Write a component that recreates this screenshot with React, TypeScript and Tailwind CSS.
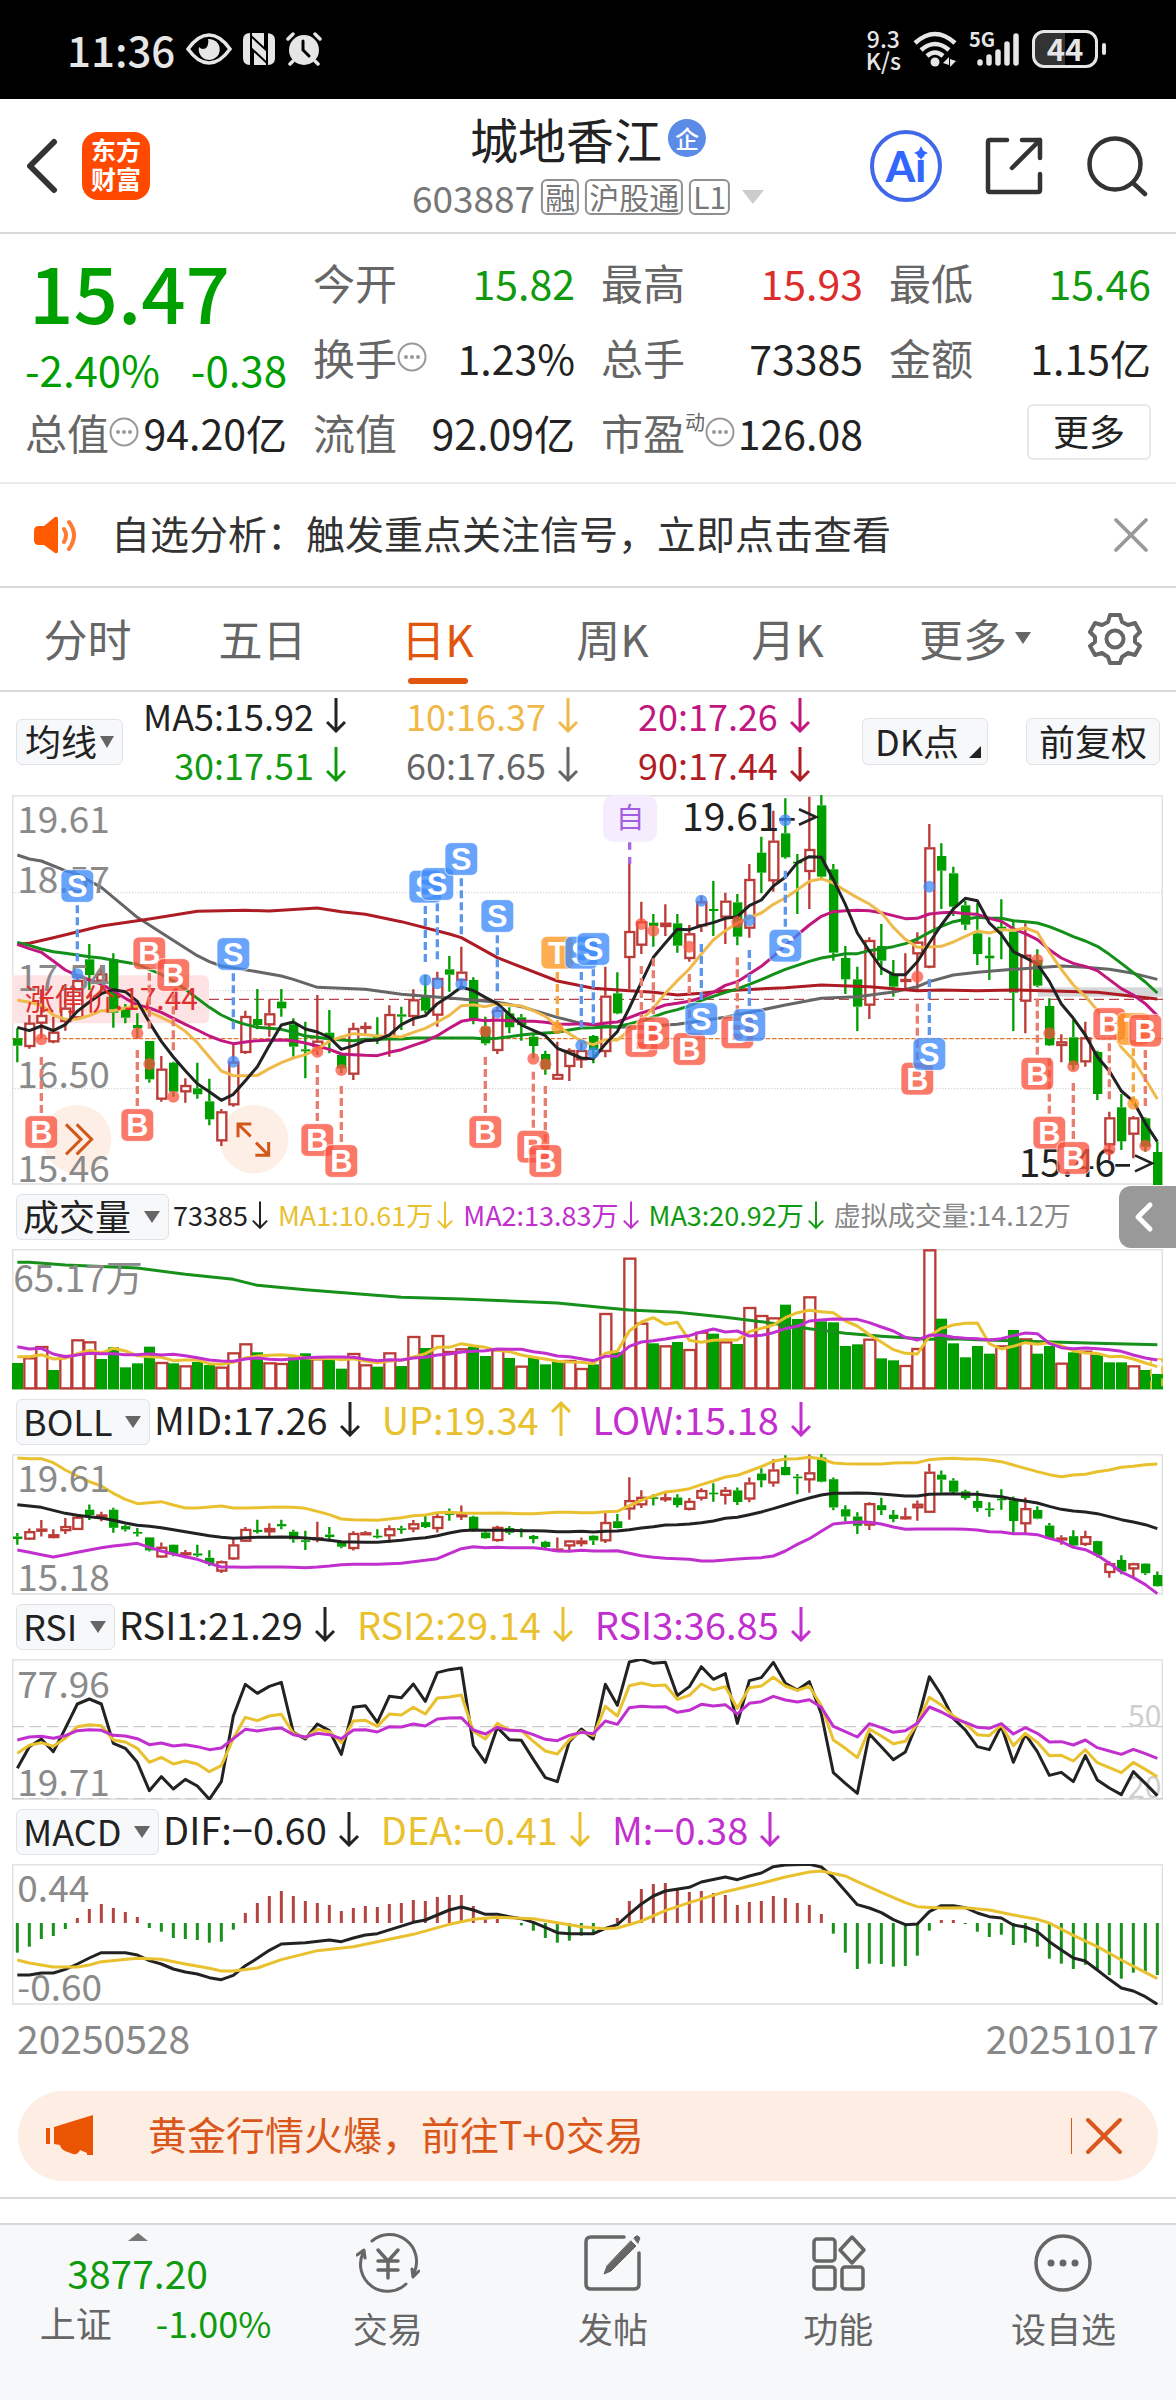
import React from "react";
import { X, ChevronLeft } from "lucide-react";

type Pt = [number, number];
type Candle = [string, number, number, number, number];

/* ------------------------------------------------------------------ */
/* Chart data, in chart units: one slot is 36 units wide               */
/* ------------------------------------------------------------------ */

// colour, high, body top, body bottom, low
const CANDLES: Candle[] = [
  ["g", 745, 775, 797, 847], ["r", 705, 728, 800, 806], ["r", 628, 705, 730, 775], ["r", 710, 755, 786, 790],
  ["r", 612, 683, 725, 752], ["r", 590, 600, 714, 718], ["g", 492, 538, 585, 630], ["r", 555, 580, 604, 640],
  ["g", 520, 538, 698, 743], ["g", 672, 683, 713, 730], ["g", 700, 735, 745, 775], ["g", 783, 783, 898, 908],
  ["r", 828, 866, 958, 965], ["g", 845, 848, 935, 950], ["r", 895, 915, 936, 968], ["g", 848, 925, 943, 956],
  ["g", 896, 964, 1018, 1036], ["r", 987, 994, 1083, 1098], ["r", 790, 845, 975, 980], ["r", 692, 708, 818, 822],
  ["g", 627, 717, 735, 748], ["r", 658, 700, 735, 770], ["g", 627, 665, 685, 710], ["g", 715, 733, 800, 830],
  ["g", 725, 808, 814, 895], ["r", 645, 782, 800, 825], ["g", 690, 758, 780, 820], ["g", 820, 825, 865, 880],
  ["r", 728, 744, 883, 900], ["r", 727, 738, 746, 762], ["g", 712, 768, 774, 792], ["r", 676, 702, 770, 830],
  ["g", 680, 703, 710, 750], ["r", 628, 658, 710, 738], ["g", 585, 648, 692, 700], ["r", 575, 594, 706, 740],
  ["g", 528, 568, 584, 635], ["r", 500, 575, 602, 630], ["g", 592, 600, 717, 733], ["g", 710, 740, 790, 796],
  ["r", 680, 690, 812, 822], ["g", 682, 700, 742, 760], ["g", 702, 712, 735, 782], ["g", 762, 770, 798, 835],
  ["g", 812, 822, 868, 884], ["r", 785, 882, 898, 900], ["r", 805, 810, 860, 903], ["r", 785, 810, 840, 864],
  ["g", 765, 768, 810, 850], ["r", 560, 647, 815, 832], ["g", 577, 640, 700, 703], ["r", 250, 453, 533, 627],
  ["r", 365, 424, 496, 522], ["g", 402, 428, 438, 500], ["r", 373, 428, 440, 468], ["g", 402, 430, 497, 518],
  ["r", 435, 460, 536, 545], ["r", 348, 364, 438, 456], ["g", 303, 387, 393, 468], ["r", 338, 362, 412, 492],
  ["g", 342, 367, 470, 496], ["r", 252, 297, 445, 473], ["g", 170, 218, 278, 340], ["r", 92, 182, 303, 335],
  ["g", 55, 160, 232, 236], ["g", 222, 245, 250, 402], ["r", 50, 207, 275, 387], ["g", 45, 76, 290, 295],
  ["g", 252, 268, 518, 542], ["g", 498, 534, 598, 642], ["g", 560, 598, 680, 753], ["r", 472, 480, 676, 717],
  ["g", 432, 498, 542, 585], ["g", 540, 582, 620, 650], ["r", 520, 597, 603, 625], ["r", 457, 485, 522, 635],
  ["r", 132, 202, 562, 565], ["g", 190, 228, 272, 387], ["g", 260, 280, 380, 408], ["g", 362, 376, 434, 450],
  ["g", 370, 460, 522, 555], ["g", 472, 527, 535, 600], ["g", 358, 440, 446, 538], ["g", 420, 455, 638, 753],
  ["r", 430, 524, 664, 760], ["g", 508, 540, 617, 622], ["g", 655, 678, 796, 798], ["r", 763, 784, 797, 847],
  ["g", 720, 772, 855, 870], ["r", 725, 772, 846, 860], ["g", 812, 816, 942, 960], ["r", 995, 1012, 1095, 1140],
  ["g", 942, 982, 1084, 1110], ["r", 1008, 1012, 1063, 1135], ["g", 1012, 1015, 1100, 1115], ["g", 1085, 1116, 1215, 1218],
];

const VOLUME_TOPS = [
  549, 532, 498, 570, 525, 478, 484, 537, 502, 562, 550, 500, 546, 550, 556, 546, 555, 560, 517, 490, 517, 547, 549, 532,
  520, 535, 540, 566, 519, 553, 560, 517, 558, 468, 504, 465, 513, 505, 500, 528, 508, 534, 557, 532, 553, 546, 540, 564,
  553, 399, 516, 233, 428, 490, 496, 486, 507, 455, 461, 484, 492, 381, 405, 412, 374, 417, 349, 424, 427, 498, 493, 476,
  535, 541, 555, 504, 208, 416, 490, 532, 498, 521, 496, 450, 475, 521, 498, 548, 517, 512, 524, 547, 547, 556, 570, 582,
];
const VOLUME_COLORS =
  "grrgrrrgggggrgrggrrrgrrggrggrrgrgrgrrrggrgrgggrr" + "grgrrgrgrrgrgrrrggrggggrggrrrgggggrgrggrgrgggrgg";

const RSI1 = [
  535, 470, 447, 485, 415, 342, 327, 342, 460, 475, 517, 602, 560, 597, 568, 588, 628, 575, 378, 283, 310, 289, 277, 427,
  447, 402, 422, 493, 352, 347, 397, 319, 323, 282, 334, 248, 239, 234, 466, 517, 412, 449, 451, 508, 563, 575, 455, 417,
  447, 283, 346, 216, 208, 220, 217, 317, 290, 230, 268, 251, 400, 272, 263, 217, 280, 300, 275, 372, 548, 580, 610, 432,
  470, 509, 486, 398, 260, 315, 385, 420, 470, 479, 408, 517, 433, 485, 556, 547, 575, 497, 570, 594, 614, 545, 580, 617,
];
const RSI2 = [
  490, 466, 458, 469, 445, 410, 404, 407, 450, 456, 475, 517, 502, 522, 513, 522, 545, 527, 445, 382, 392, 378, 373, 430,
  443, 418, 425, 458, 393, 391, 409, 372, 375, 352, 372, 324, 321, 315, 424, 447, 400, 420, 422, 454, 483, 492, 449, 424,
  437, 349, 378, 287, 279, 287, 285, 328, 316, 282, 300, 290, 355, 293, 288, 262, 288, 301, 289, 347, 450, 475, 503, 417,
  438, 461, 454, 400, 322, 345, 378, 400, 434, 437, 405, 467, 430, 457, 497, 496, 513, 479, 518, 533, 548, 517, 538, 560,
];
const RSI3 = [
  450, 441, 439, 445, 437, 422, 419, 421, 436, 438, 446, 464, 459, 468, 464, 470, 479, 474, 446, 418, 423, 417, 414, 434,
  441, 430, 434, 446, 420, 419, 426, 410, 411, 402, 408, 387, 384, 383, 420, 432, 412, 421, 422, 434, 448, 452, 436, 427,
  431, 393, 403, 353, 349, 351, 350, 367, 361, 343, 348, 344, 372, 340, 335, 319, 330, 336, 329, 352, 409, 425, 441, 401,
  413, 427, 422, 400, 351, 366, 385, 397, 412, 415, 401, 432, 413, 430, 456, 455, 465, 450, 473, 483, 493, 478, 491, 505,
];

const MACD_BARS = [
  1088, 1070, 1047, 1038, 1017, 984, 957, 942, 954, 966, 981, 1014, 1025, 1044, 1047, 1050, 1058, 1055, 1019, 969, 939,
  918, 903, 918, 933, 939, 945, 963, 954, 948, 951, 942, 939, 930, 933, 921, 915, 915, 948, 981, 987, 999, 1006, 1022,
  1044, 1058, 1052, 1037, 1034, 999, 984, 933, 897, 882, 879, 897, 906, 903, 909, 915, 945, 936, 933, 918, 924, 939, 945,
  972, 1031, 1088, 1137, 1121, 1122, 1130, 1128, 1097, 1022, 990, 990, 1002, 1025, 1041, 1034, 1065, 1058, 1070, 1106,
  1121, 1137, 1124, 1137, 1155, 1166, 1148, 1145, 1155,
];
const DIF: Pt[] = [
  [0, 1155], [1, 1155], [2, 1149], [3, 1149], [4, 1138], [5, 1122], [6, 1104], [7, 1088], [9, 1088], [10, 1095],
  [11, 1112], [12, 1122], [13, 1137], [14, 1146], [15, 1152], [16, 1163], [17, 1169], [18, 1156], [19, 1127], [20, 1105],
  [21, 1081], [22, 1062], [24, 1058], [26, 1050], [27, 1055], [28, 1044], [29, 1035], [30, 1031], [33, 997], [34, 990],
  [35, 975], [36, 960], [37, 951], [38, 960], [39, 973], [40, 973], [41, 980], [42, 986], [43, 997], [44, 1012],
  [45, 1028], [46, 1031], [48, 1031], [49, 1015], [50, 1004], [51, 972], [52, 942], [53, 918], [54, 903], [56, 892],
  [57, 876], [59, 861], [60, 869], [61, 858], [62, 849], [63, 830], [64, 825], [66, 823], [67, 831], [68, 862],
  [69, 903], [70, 944], [71, 954], [72, 968], [73, 989], [74, 1004], [75, 1002], [76, 965], [77, 947], [78, 947],
  [79, 953], [80, 969], [81, 980], [82, 984], [83, 1005], [84, 1011], [85, 1025], [86, 1055], [87, 1080], [88, 1104],
  [89, 1113], [90, 1140], [91, 1168], [92, 1194], [93, 1203], [94, 1220], [95, 1243],
];
const DEA: Pt[] = [
  [0, 1110], [1, 1119], [3, 1131], [5, 1131], [6, 1125], [7, 1115], [10, 1105], [12, 1108], [14, 1122], [16, 1135],
  [17, 1143], [18, 1143], [20, 1134], [22, 1109], [25, 1082], [28, 1070], [30, 1055], [33, 1033], [36, 1003], [38, 988],
  [40, 982], [43, 986], [45, 998], [47, 1010], [49, 1016], [50, 1014], [52, 993], [54, 962], [56, 938], [59, 905],
  [62, 880], [64, 861], [66, 846], [67, 843], [69, 858], [70, 875], [72, 907], [74, 938], [75, 950], [77, 954],
  [79, 953], [81, 960], [83, 975], [85, 988], [86, 999], [88, 1036], [90, 1070], [92, 1110], [94, 1147], [95, 1166],
];

const MA60: Pt[] = [
  [0, 225], [1, 237], [2, 243], [4, 272], [5, 283], [7, 322], [10, 412], [12, 458], [15, 527], [16, 545], [17, 558],
  [20, 575], [22, 588], [23, 598], [25, 622], [29, 628], [32, 643], [37, 657], [40, 667], [42, 680], [45, 712],
  [47, 730], [50, 742], [52, 740], [55, 733], [57, 722], [59, 712], [62, 690], [64, 675], [67, 655], [70, 650],
  [73, 636], [75, 620], [76, 605], [78, 585], [80, 577], [83, 568], [87, 558], [89, 562], [91, 568], [93, 580], [95, 598],
];
const MA90: Pt[] = [
  [0, 493], [1, 490], [3, 473], [7, 438], [11, 417], [15, 394], [19, 391], [21, 393], [25, 384], [27, 395], [29, 403],
  [31, 418], [32, 425], [36, 462], [37, 473], [40, 533], [45, 603], [48, 625], [51, 632], [53, 637], [55, 645],
  [57, 640], [59, 632], [64, 623], [67, 615], [71, 620], [75, 632], [77, 630], [80, 632], [83, 630], [87, 634],
  [90, 637], [95, 657],
];
const VOLUME_LONG: Pt[] = [
  [0, 247], [1, 247], [4, 255], [10, 264], [14, 283], [18, 298], [20, 316], [24, 329], [32, 352], [37, 357], [45, 369],
  [49, 383], [51, 390], [55, 397], [59, 412], [62, 425], [66, 446], [69, 460], [72, 469], [76, 478], [78, 476],
  [80, 479], [84, 484], [90, 490], [95, 494],
];

type Marker = { kind: "S" | "B" | "T"; i: number; y: number; dot: number };
const MARKERS: Marker[] = [
  { kind: "S", i: 5, y: 318, dot: 583 }, { kind: "B", i: 2, y: 1056, dot: 778 }, { kind: "B", i: 10, y: 1035, dot: 760 },
  { kind: "B", i: 11, y: 520, dot: 852 }, { kind: "B", i: 13, y: 585, dot: 950 }, { kind: "S", i: 18, y: 522, dot: 845 },
  { kind: "B", i: 25, y: 1080, dot: 815 }, { kind: "B", i: 27, y: 1143, dot: 870 }, { kind: "S", i: 34, y: 320, dot: 600 },
  { kind: "S", i: 35, y: 312, dot: 610 }, { kind: "S", i: 37, y: 237, dot: 612 }, { kind: "B", i: 39, y: 1056, dot: 754 },
  { kind: "S", i: 40, y: 408, dot: 697 }, { kind: "B", i: 43, y: 1100, dot: 836 }, { kind: "B", i: 44, y: 1143, dot: 853 },
  { kind: "T", i: 45, y: 518, dot: 744 }, { kind: "S", i: 47, y: 518, dot: 796 }, { kind: "S", i: 48, y: 507, dot: 818 },
  { kind: "B", i: 52, y: 783, dot: 432 }, { kind: "B", i: 53, y: 760, dot: 452 }, { kind: "B", i: 56, y: 807, dot: 500 },
  { kind: "S", i: 57, y: 717, dot: 362 }, { kind: "B", i: 60, y: 757, dot: 426 }, { kind: "S", i: 61, y: 735, dot: 421 },
  { kind: "S", i: 64, y: 497, dot: 121 }, { kind: "B", i: 75, y: 896, dot: 590 }, { kind: "S", i: 76, y: 822, dot: 320 },
  { kind: "B", i: 85, y: 881, dot: 540 }, { kind: "B", i: 86, y: 1058, dot: 760 }, { kind: "B", i: 88, y: 1134, dot: 859 },
  { kind: "B", i: 91, y: 732, dot: 1108 }, { kind: "T", i: 93, y: 747, dot: 971 }, { kind: "B", i: 94, y: 752, dot: 1097 },
];
const MARKER_COLORS = {
  S: { badge: "#3d8bfb", line: "#5b97ec" },
  B: { badge: "#f9533f", line: "#e97d6e" },
  T: { badge: "#ff9620", line: "#f5a83f" },
};

/* ------------------------------------------------------------------ */
/* Helpers                                                             */
/* ------------------------------------------------------------------ */

const slotX = (i: number) => 52 + 36 * i;
const indexed = (ys: number[]): Pt[] => ys.map((y, i): Pt => [i, y]);
const CLOSES = CANDLES.map(([c, , top, bottom]) => (c === "r" ? top : bottom));

function average(values: number[], n: number, lead: number[]): number[] {
  return values.map((_, i) =>
    i < lead.length ? lead[i] : values.slice(i - n + 1, i + 1).reduce((a, b) => a + b, 0) / n
  );
}

const MA5 = average(CLOSES, 5, [742, 752, 738, 752]);
const MA10 = average(CLOSES, 10, [660, 667, 675, 705, 718, 717, 707, 692, 692]);
const MA20 = average(CLOSES, 20, [
  493, 506, 517, 543, 570, 587, 600, 612, 633, 655, 675, 684, 697, 715, 733, 750, 768, 782, 791,
]);
const MA30 = average(CLOSES, 30, [
  487, 496, 507, 515, 520, 525, 530, 534, 541, 547, 553, 568, 583, 603, 628, 655, 682, 705, 722, 733, 742, 745, 748, 757,
  768, 772, 777, 780, 782,
]);

const toBoll = (y: number) => 822 + (y - 45) * 0.339;
const DEVIATION = CLOSES.map((_, i) => {
  if (i < 19) return 0;
  const w = CLOSES.slice(i - 19, i + 1);
  return Math.sqrt(w.reduce((a, v) => a + (v - MA20[i]) ** 2, 0) / 20);
});
const UPPER_LEAD = [834, 836, 836, 848, 870, 888, 905, 918, 940, 958, 971, 968, 965, 975, 984, 984, 981, 978, 984];
const LOWER_LEAD = [1110, 1117, 1124, 1131, 1124, 1117, 1110, 1103, 1098, 1094, 1090, 1102, 1113, 1122, 1130, 1138, 1150, 1161, 1161];
const BOLL_UPPER = MA20.map((m, i) => UPPER_LEAD[i] ?? toBoll(m - 2 * DEVIATION[i]));
const BOLL_LOWER = MA20.map((m, i) => LOWER_LEAD[i] ?? toBoll(m + 2 * DEVIATION[i]));

function Line({ points, color }: { points: Pt[]; color: string }) {
  return (
    <polyline
      points={points.map(([i, y]) => `${slotX(i)},${Math.round(y)}`).join(" ")}
      fill="none"
      stroke={color}
      strokeWidth={9}
      strokeLinejoin="round"
    />
  );
}

function Candles({ map }: { map: (y: number) => number }) {
  return (
    <g strokeWidth={7}>
      {CANDLES.map(([c, high, top, bottom, low], i) => {
        const x = slotX(i);
        const t = map(top);
        const h = Math.max(map(bottom) - t, 5);
        const color = c === "r" ? "#bb3b37" : "#009f00";
        return (
          <g key={i} stroke={color}>
            <path d={`M${x} ${map(high)}V${t}M${x} ${t + h}V${map(low)}`} />
            {c === "r" ? (
              <rect x={x - 12} y={t + 3} width={27} height={Math.max(h - 5, 3)} fill="#fff" />
            ) : (
              <rect x={x - 13} y={t} width={28} height={h} fill={color} stroke="none" />
            )}
          </g>
        );
      })}
    </g>
  );
}

function Frame({ y, height }: { y: number; height: number }) {
  return <rect x={38} y={y + 2} width={3449} height={height - 5} fill="none" stroke="#e2e2e2" strokeWidth={5} />;
}

function AxisLabel({ y, children, x = 52 }: { y: number; children: React.ReactNode; x?: number }) {
  return (
    <text x={x} y={y} fontSize={111} fill="#8a8a8a">
      {children}
    </text>
  );
}

/* ------------------------------------------------------------------ */
/* Charts                                                              */
/* ------------------------------------------------------------------ */

function Badge({ marker }: { marker: Marker }) {
  const { kind, i, y } = marker;
  const x = slotX(i);
  return (
    <g>
      <rect x={x - 49} y={y - 49} width={98} height={98} rx={18} fill={MARKER_COLORS[kind].badge} fillOpacity={0.78} stroke="#fff" strokeOpacity={0.7} strokeWidth={3} />
      <text x={x} y={y + 33} fontSize={92} fontWeight={700} fill="#fff" textAnchor="middle" className="font-['Liberation_Sans',sans-serif]">
        {kind}
      </text>
    </g>
  );
}

function PriceChart() {
  return (
    <svg viewBox="36 45 3453 1170" className="block h-auto w-full" role="img" aria-label="日K线图">
      <Frame y={45} height={1170} />
      <g stroke="#cfcfcf" strokeWidth={3} strokeDasharray="4 5">
        <path d="M36 338H3489M36 632H3489M36 926H3489" />
      </g>
      <rect x={3113} y={622} width={376} height={28} fill="#d6d7d8" />
      <path d="M627 658H3489" stroke="#b4444c" strokeWidth={4} strokeDasharray="30 15" />
      <path d="M36 776H3489" stroke="#e0782f" strokeWidth={4} strokeDasharray="14 5" />
      <circle cx={231} cy={1078} r={103} fill="#feefe6" />
      <circle cx={762} cy={1078} r={103} fill="#feefe6" />
      <path d="M36 586H607Q627 586 627 606V710Q627 730 607 730H36Z" fill="#fde3e3" />

      <Candles map={(y) => y} />
      <g fill="none" stroke="#d2581a" strokeWidth={9}>
        <path d="M198 1033L243 1078L198 1123M230 1033L275 1078L230 1123" />
        <path d="M752 1069L714 1032M714 1072V1032H754M768 1088L806 1126M806 1086V1126H766" />
      </g>

      <Line points={MA60} color="#666666" />
      <Line points={MA90} color="#ad1c24" />
      <Line points={indexed(MA30)} color="#12901a" />
      <Line points={indexed(MA20)} color="#c2177f" />
      <Line points={indexed(MA10)} color="#efb94c" />
      <Line points={indexed(MA5)} color="#222222" />

      <AxisLabel y={158}>19.61</AxisLabel>
      <AxisLabel y={340}>18.57</AxisLabel>
      <AxisLabel y={632}>17.54</AxisLabel>
      <AxisLabel y={924}>16.50</AxisLabel>
      <AxisLabel y={1206}>15.46</AxisLabel>

      <text x={74} y={690} fontSize={90} fill="#e0302e">
        涨停价:17.44
      </text>

      <g fill="#222">
        <text x={2046} y={152} fontSize={117}>
          19.61
        </text>
        <text x={3056} y={1190} fontSize={117}>
          15.46
        </text>
      </g>
      <g fill="none" stroke="#222" strokeWidth={8}>
        <path d="M2338 118H2384M2397 88L2448 111L2397 134" />
        <path d="M3346 1156H3390M3405 1126L3456 1150L3405 1174" />
      </g>

      {MARKERS.map((m, k) => {
        const x = slotX(m.i);
        const color = MARKER_COLORS[m.kind];
        const range = m.y > m.dot ? [m.y - 225, m.y - 50] : [m.y + 58, m.y + 228];
        return (
          <g key={k}>
            <path d={`M${x} ${range[0]}V${range[1]}`} stroke={color.line} strokeWidth={10} strokeDasharray="24 12" />
            <circle cx={x} cy={m.dot} r={18} fill={color.badge} fillOpacity={0.75} />
          </g>
        );
      })}
      <path d="M1889 187V252" stroke="#a866e0" strokeWidth={10} strokeDasharray="22 22" />
      {MARKERS.map((m, k) => (
        <Badge key={k} marker={m} />
      ))}
      <rect x={1809} y={46} width={162} height={139} rx={30} fill="#f5ecfe" />
      <text x={1890} y={145} fontSize={86} fill="#a35ee0" textAnchor="middle">
        自
      </text>
    </svg>
  );
}

function VolumeChart() {
  return (
    <svg viewBox="36 207 3453 423" className="block h-auto w-full" role="img" aria-label="成交量">
      <Frame y={207} height={423} />
      {VOLUME_TOPS.map((top, i) => {
        const x = slotX(i);
        return VOLUME_COLORS[i] === "r" ? (
          <rect key={i} x={x - 15} y={top + 3} width={33} height={622 - top} fill="#fff" stroke="#bb3b37" strokeWidth={7} />
        ) : (
          <rect key={i} x={x - 16} y={top} width={33} height={628 - top} fill="#009f00" />
        );
      })}
      <path d="M3453 626V537H3486V626" fill="none" stroke="#e8c02c" strokeWidth={5} strokeDasharray="24 12" />
      <Line points={VOLUME_LONG} color="#17901c" />
      <Line points={indexed(average(VOLUME_TOPS, 5, [530, 530, 524, 537]))} color="#e9c02e" />
      <Line points={indexed(average(VOLUME_TOPS, 10, [500, 507, 505, 522, 530, 525, 520, 521, 521]))} color="#c22fcf" />
      <AxisLabel x={40} y={337}>65.17万</AxisLabel>
    </svg>
  );
}

function BollChart() {
  return (
    <svg viewBox="36 822 3453 423" className="block h-auto w-full" role="img" aria-label="BOLL">
      <Frame y={822} height={423} />
      <Candles map={toBoll} />
      <Line points={indexed(MA20.map(toBoll))} color="#222222" />
      <Line points={indexed(BOLL_UPPER)} color="#e9c02e" />
      <Line points={indexed(BOLL_LOWER)} color="#c22fcf" />
      <AxisLabel y={937}>19.61</AxisLabel>
      <AxisLabel y={1232}>15.18</AxisLabel>
    </svg>
  );
}

function RsiChart() {
  return (
    <svg viewBox="36 207 3453 423" className="block h-auto w-full" role="img" aria-label="RSI">
      <Frame y={207} height={423} />
      <path d="M36 410H3489M36 626H3489" stroke="#cccccc" strokeWidth={4} strokeDasharray="36 16" />
      <g fontSize={90} fill="#cfcfcf" textAnchor="end">
        <text x={3484} y={410}>50</text>
        <text x={3484} y={625}>20</text>
      </g>
      <AxisLabel y={323}>77.96</AxisLabel>
      <AxisLabel y={617}>19.71</AxisLabel>
      <Line points={indexed(RSI1)} color="#222222" />
      <Line points={indexed(RSI2)} color="#e9c02e" />
      <Line points={indexed(RSI3)} color="#c22fcf" />
    </svg>
  );
}

function MacdChart() {
  return (
    <svg viewBox="36 822 3453 423" className="block h-auto w-full" role="img" aria-label="MACD">
      <Frame y={822} height={423} />
      {MACD_BARS.map((y, i) => (
        <path key={i} d={`M${slotX(i)} 999V${y}`} stroke={y > 999 ? "#17901c" : "#b34440"} strokeWidth={9} />
      ))}
      <AxisLabel y={937}>0.44</AxisLabel>
      <AxisLabel y={1232}>-0.60</AxisLabel>
      <Line points={DIF} color="#222222" />
      <Line points={DEA} color="#e9c02e" />
    </svg>
  );
}

/* ------------------------------------------------------------------ */
/* Small parts                                                         */
/* ------------------------------------------------------------------ */

function Trend({ up = false, narrow = false }: { up?: boolean; narrow?: boolean }) {
  return (
    <svg viewBox="0 0 20 36" className={narrow ? "h-8 w-4 shrink-0" : "h-9 w-5 shrink-0"} fill="none" stroke="currentColor" strokeWidth={narrow ? 2.5 : 3} aria-hidden="true">
      <path d={up ? "M10 35V2M1 11L10 2L19 11" : "M10 1V34M1 25L10 34L19 25"} />
    </svg>
  );
}

function Caret({ className }: { className: string }) {
  return (
    <svg viewBox="0 0 16 12" preserveAspectRatio="none" className={className} fill="currentColor" aria-hidden="true">
      <path d="M0 0H16L8 12Z" />
    </svg>
  );
}

function Info() {
  return (
    <svg viewBox="0 0 30 30" className="size-[30px] shrink-0" aria-label="说明">
      <circle cx={15} cy={15} r={13.5} fill="none" stroke="#999" strokeWidth={2} />
      <g fill="#999">
        <circle cx={9} cy={15} r={2} />
        <circle cx={15} cy={15} r={2} />
        <circle cx={21} cy={15} r={2} />
      </g>
    </svg>
  );
}

function Picker({ label, options, tight = false }: { label: string; options: string; tight?: boolean }) {
  return (
    <label className="relative flex h-[46px] shrink-0 items-center rounded-md border border-[#dfe2e6] bg-[#f7f8fa] text-4xl leading-[44px] text-[#222]">
      <span className="sr-only">{label}</span>
      <select
        className={
          tight
            ? "h-full appearance-none bg-transparent pr-6 pb-1 pl-2 leading-10 outline-none"
            : "h-full appearance-none bg-transparent pr-9 pb-1 pl-[6px] leading-10 outline-none"
        }
      >
        <option>{options}</option>
      </select>
      <Caret className={tight ? "pointer-events-none absolute right-2 h-3 w-3.5 text-[#666]" : "pointer-events-none absolute right-2 h-3 w-4 text-[#666]"} />
    </label>
  );
}

function Legend({ color, text, up }: { color: string; text: string; up?: boolean }) {
  return (
    <span className={`flex items-center gap-3 ${color}`}>
      {text}
      <Trend up={up} />
    </span>
  );
}

function IndicatorRow({ name, children }: { name: string; children: React.ReactNode }) {
  return (
    <div className="flex h-16 items-center gap-1 pl-4 whitespace-nowrap">
      <Picker label={`${name}指标`} options={name} />
      <div className="flex items-center gap-[22px] pb-1.5 text-[38px] leading-[46px]">{children}</div>
    </div>
  );
}

function Metric({ label, value, color = "text-[#222]", mark }: { label: string; value: string; color?: string; mark?: React.ReactNode }) {
  return (
    <div className="flex h-[75px] items-center justify-between whitespace-nowrap">
      <dt className="flex items-center text-[#666]">
        {label}
        {mark}
      </dt>
      <dd className={`text-[41px] ${color}`}>{value}</dd>
    </div>
  );
}

/* ------------------------------------------------------------------ */
/* Sections                                                            */
/* ------------------------------------------------------------------ */

function StatusBar() {
  return (
    <div className="flex h-[99px] items-center justify-between bg-black pr-[70px] pb-0.5 pl-[67px] text-[#e6e6e6]">
      <div className="flex items-center gap-[11px]">
        <span className="text-[42px] leading-[50px] font-medium">11:36</span>
        <svg viewBox="0 0 46 32" className="h-8 w-[46px]" aria-hidden="true">
          <path d="M2 16Q12 2 23 2T44 16Q34 30 23 30T2 16Z" fill="none" stroke="currentColor" strokeWidth={3.5} />
          <path d="M22 6A10.500 10.500 0 1 1 13 14A5 5 0 0 0 21 14Q23 9 22 6Z" fill="currentColor" />
        </svg>
        <svg viewBox="0 0 32 32" className="size-8" aria-hidden="true">
          <path d="M7 0H23Q32 0 32 7V25Q32 32 25 32H7Q0 32 0 25V7Q0 0 7 0Z" fill="currentColor" />
          <path d="M8 0V32M8 3L22 16V0M24 32V0M24 30L10 17V32" fill="none" stroke="#000" strokeWidth={2} />
        </svg>
        <svg viewBox="0 0 36 34" className="h-[34px] w-9" fill="none" stroke="currentColor" strokeLinecap="round" aria-hidden="true">
          <circle cx={18} cy={18} r={15} fill="currentColor" stroke="none" />
          <path d="M2 7L7 2M29 2L34 7M7 29L4 32M29 29L32 32" strokeWidth={3.500} />
          <path d="M17 9V18L23 24" stroke="#000" strokeWidth={3} />
        </svg>
      </div>
      <div className="flex items-center">
        <div className="mr-3 text-center text-[23px] leading-[22px] font-medium">
          9.3
          <br />
          K/s
        </div>
        <svg viewBox="0 0 44 36" className="mr-3 h-9 w-11" fill="none" stroke="currentColor" strokeWidth={4.500} aria-hidden="true">
          <path d="M2 12Q22 -6 42 12M8 19Q22 7 36 19M14 25Q22 18 30 25" />
          <circle cx={22} cy={31} r={4.500} fill="currentColor" stroke="none" />
          <path d="M30 32L36 26V34ZM43 30L37 36V28Z" fill="currentColor" stroke="none" />
        </svg>
        <div className="relative mr-3 h-[38px] w-[51px]">
          <span className="absolute -top-0.5 left-0 text-[20px] leading-[22px] font-bold">5G</span>
          <svg viewBox="0 0 44 38" className="absolute right-0 bottom-0 h-[38px] w-11" fill="none" stroke="currentColor" strokeWidth={5.500} strokeLinecap="round" aria-hidden="true">
            <path d="M4 32V33M13 27V33M22 22V33M31 14V33M40 6V33" />
          </svg>
        </div>
        <div className="flex h-[38px] w-[66px] items-center justify-center rounded-xl border-[3px] border-[#e6e6e6] bg-linear-to-r from-[#333] from-50% to-black to-50% pb-0.5 text-[31px] leading-8 font-bold">
          44
        </div>
        <span className="ml-1 h-3 w-1 rounded-full bg-[#e6e6e6]" />
      </div>
    </div>
  );
}

function Header() {
  const tag = "flex h-9 items-center rounded-md border-2 border-[#8f8f8f] px-0.5 pb-0.5 text-[30px] leading-8";
  return (
    <header className="relative flex h-[135px] items-center justify-between border-b-2 border-[#d9d9d9] px-6">
      <div className="flex items-center gap-6">
        <button type="button" aria-label="返回" className="text-[#333]">
          <svg viewBox="0 0 34 56" className="h-14 w-[34px]" fill="none" stroke="currentColor" strokeWidth={6} strokeLinecap="round" strokeLinejoin="round" aria-hidden="true">
            <path d="M30 4L6 28L30 52" />
          </svg>
        </button>
        <a href="#home" className="grid size-[68px] place-content-center rounded-2xl bg-[#ff4800] pb-1 text-center text-[25px] leading-[29px] font-bold text-white">
          东方
          <br />
          财富
        </a>
      </div>
      <div className="absolute left-1/2 flex -translate-x-1/2 flex-col items-center pt-1 whitespace-nowrap">
        <div className="flex items-center gap-1.5">
          <h1 className="text-5xl leading-[58px] text-[#222]">城地香江</h1>
          <span className="grid size-[38px] place-content-center rounded-full bg-[#5b8be6] text-[24px] leading-6 font-medium text-white">企</span>
        </div>
        <button type="button" className="flex h-[60px] items-center gap-1.5 text-[37px] leading-[44px] text-[#777]">
          603887
          <span className={tag}>融</span>
          <span className={tag}>沪股通</span>
          <span className={tag}>L1</span>
          <Caret className="ml-1.5 h-3.5 w-[22px] text-[#ccc]" />
        </button>
      </div>
      <div className="flex items-center gap-[42px] pr-1 text-[#333]">
        <button type="button" aria-label="Ai" className="relative grid size-[72px] place-content-center rounded-full border-4 border-[#4168e8] text-[42px] leading-[60px] text-[#3366ff]">
          <span className="font-[Lato,sans-serif] font-black">Ai</span>
          <svg viewBox="0 0 12 12" className="absolute top-3 right-2.5 size-3.5" fill="currentColor" aria-hidden="true">
            <path d="M6 0L8 4L12 6L8 8L6 12L4 8L0 6L4 4Z" />
          </svg>
        </button>
        <button type="button" aria-label="分享">
          <svg viewBox="0 0 60 60" className="size-[60px]" fill="none" stroke="currentColor" strokeWidth={4.500} strokeLinecap="round" strokeLinejoin="round" aria-hidden="true">
            <path d="M23 4H6Q4 4 4 6V54Q4 56 6 56H54Q56 56 56 54V38M38 4H56V22M56 4L28 32" />
          </svg>
        </button>
        <button type="button" aria-label="搜索">
          <svg viewBox="0 0 62 62" className="size-[62px]" fill="none" stroke="currentColor" strokeWidth={4.500} strokeLinecap="round" aria-hidden="true">
            <circle cx={29} cy={29} r={25.500} />
            <path d="M47 48L59 59" />
          </svg>
        </button>
      </div>
    </header>
  );
}

function Quote() {
  return (
    <section className="grid h-[250px] grid-cols-4 gap-x-[26px] border-b-2 border-[#ececec] px-[25px] pt-2.5 text-[42px] leading-[50px]">
      <div className="text-[#009f00]">
        <div className="h-[90px] pl-1 text-[78px] leading-[92px] font-medium">15.47</div>
        <div className="flex h-[60px] items-center justify-between pt-2.5 whitespace-nowrap">
          <span>-2.40%</span>
          <span>-0.38</span>
        </div>
        <dl>
          <Metric label="总值" value="94.20亿" mark={<Info />} />
        </dl>
      </div>
      <dl>
        <Metric label="今开" value="15.82" color="text-[#109a10]" />
        <Metric label="换手" value="1.23%" mark={<Info />} />
        <Metric label="流值" value="92.09亿" />
      </dl>
      <dl>
        <Metric label="最高" value="15.93" color="text-[#dc2c2c]" />
        <Metric label="总手" value="73385" />
        <Metric
          label="市盈"
          value="126.08"
          mark={
            <>
              <sup className="text-[20px] leading-5">动</sup>
              <Info />
            </>
          }
        />
      </dl>
      <div>
        <dl>
          <Metric label="最低" value="15.46" color="text-[#109a10]" />
          <Metric label="金额" value="1.15亿" />
        </dl>
        <div className="flex h-[75px] items-center justify-end">
          <button type="button" className="h-14 w-[124px] rounded-md border-2 border-[#e8e8e8] pb-1 text-4xl leading-[48px] text-[#222]">
            更多
          </button>
        </div>
      </div>
    </section>
  );
}

function Notice() {
  return (
    <section className="flex h-[104px] items-center border-b-2 border-[#d9d9d9] pr-[15px] pl-[33px] text-[#333]">
      <svg viewBox="0 0 46 40" className="h-10 w-[46px] shrink-0" aria-hidden="true">
        <path d="M6 11H11L22 2Q25 1 25 4V36Q25 39 22 38L11 30H6Q1 30 1 25V16Q1 11 6 11Z" fill="#ff5a00" />
        <path d="M31 14Q35 20 31 27M36 7Q46 20 36 34" fill="none" stroke="#ff7a30" strokeWidth={4} strokeLinecap="round" />
      </svg>
      <a href="#signal" className="ml-8 flex-1 pb-1.5 text-[39px] leading-[48px] whitespace-nowrap">
        自选分析：触发重点关注信号，立即点击查看
      </a>
      <button type="button" aria-label="关闭" className="text-[#999]">
        <X className="size-[60px]" strokeWidth={1.500} />
      </button>
    </section>
  );
}

function Gear() {
  return (
    <svg viewBox="0 0 54 54" className="size-[54px]" fill="none" stroke="currentColor" strokeWidth={4} strokeLinejoin="round" aria-hidden="true">
      <path d="M22 3H32L34 10L40 13L47 11L52 20L47 25V30L52 34L47 43L40 41L34 45L32 51H22L20 45L14 41L7 43L2 34L7 30V25L2 20L7 11L14 13L20 10Z" />
      <circle cx={27} cy={27} r={8.500} />
    </svg>
  );
}

function Tabs() {
  const tabs = ["分时", "五日", "日K", "周K", "月K"];
  return (
    <nav className="grid h-[104px] grid-cols-[175fr_175fr_175fr_175fr_175fr_200fr_79fr] border-b-2 border-[#d9d9d9] pr-[22px] text-[44px] leading-[52px] text-[#666]">
      {tabs.map((t) => (
        <button key={t} type="button" className={t === "日K" ? "relative pb-0.5 text-[#e0560f]" : "relative pb-0.5"}>
          {t}
          {t === "日K" && <span className="absolute bottom-1.5 left-1/2 h-1.5 w-[60px] -translate-x-1/2 rounded-full bg-[#e0560f]" />}
        </button>
      ))}
      <button type="button" className="flex items-center justify-center gap-2 pb-0.5">
        更多
        <Caret className="h-3 w-4" />
      </button>
      <button type="button" aria-label="设置" className="grid place-content-center">
        <Gear />
      </button>
    </nav>
  );
}

function MovingAverages() {
  const cell = "flex items-center justify-end gap-3";
  const button = "relative h-[47px] shrink-0 rounded-md border border-[#dfe2e6] bg-[#f7f8fa] pb-1 text-4xl leading-10 text-[#222]";
  return (
    <section className="flex h-[103px] items-center px-4 pb-1 text-4xl leading-[49px] whitespace-nowrap">
      <Picker label="主图指标" options="均线" tight />
      <div className="ml-5 grid grid-cols-[auto_auto_auto] gap-x-[60px] pb-1">
        <span className={`${cell} text-[#222]`}>MA5:15.92<Trend /></span>
        <span className={`${cell} text-[#f0b84a]`}>10:16.37<Trend /></span>
        <span className={`${cell} text-[#c2177f]`}>20:17.26<Trend /></span>
        <span className={`${cell} text-[#109a10]`}>30:17.51<Trend /></span>
        <span className={`${cell} text-[#666]`}>60:17.65<Trend /></span>
        <span className={`${cell} text-[#b01d25]`}>90:17.44<Trend /></span>
      </div>
      <button type="button" className={`${button} ml-auto pr-7 pl-3`}>
        DK点
        <svg viewBox="0 0 12 12" className="absolute right-1.5 bottom-1.5 size-3" fill="currentColor" aria-hidden="true">
          <path d="M12 0V12H0Z" />
        </svg>
      </button>
      <button type="button" className={`${button} ml-[38px] px-3`}>前复权</button>
    </section>
  );
}

function Promo() {
  return (
    <section className="mx-[18px] flex h-[90px] items-center rounded-full bg-[#fdede3] pr-[22px] pl-7 text-[#d9571a]">
      <svg viewBox="0 0 48 42" className="h-[42px] w-12" fill="#ea5504" aria-hidden="true">
        <path d="M0 13H4V29H0ZM8 12L47 0V40H41V38L34 35Q32 40 27 39L19 36Q15 34 14 30L8 29Z" />
      </svg>
      <a href="#gold" className="ml-[54px] flex-1 pb-1.5 text-[39px] leading-[48px]">
        黄金行情火爆，前往T+0交易
      </a>
      <span className="h-9 w-px bg-[#d9571a]" />
      <button type="button" aria-label="关闭">
        <X className="size-16" strokeWidth={1.500} />
      </button>
    </section>
  );
}

function NavIcon({ name }: { name: string }) {
  return (
    <svg viewBox="0 0 64 64" className="size-16" fill="none" stroke="currentColor" strokeWidth={3.500} strokeLinecap="round" strokeLinejoin="round" aria-hidden="true">
      {name === "交易" && (
        <>
          <path d="M16 10A27 27 0 0 1 58 42M63 40L57 46L56 38M50 53A27 27 0 0 1 7 22M1 24L8 19L9 27" strokeWidth={3} />
          <path d="M22 19L32 30L42 19M32 30V47M22 30H42M22 39H42" />
        </>
      )}
      {name === "发帖" && (
        <>
          <path d="M43 6H10Q5 6 5 11V53Q5 58 10 58H53Q58 58 58 53V22" />
          <path d="M50 10L55 15L30 40L23 43L26 35ZM53 7L55 5Q57 4 59 7L57 12Z" fill="currentColor" strokeWidth={1} />
        </>
      )}
      {name === "功能" && (
        <>
          <rect x={8} y={8} width={21} height={22} rx={3} />
          <rect x={8} y={36} width={21} height={22} rx={3} />
          <rect x={36} y={36} width={21} height={22} rx={3} />
          <path d="M46 6L58 19L46 32L34 19Z" />
        </>
      )}
      {name === "设自选" && (
        <>
          <circle cx={32} cy={32} r={27} />
          <g fill="currentColor" stroke="none">
            <circle cx={20} cy={32} r={3.500} />
            <circle cx={32} cy={32} r={3.500} />
            <circle cx={44} cy={32} r={3.500} />
          </g>
        </>
      )}
    </svg>
  );
}

function BottomBar() {
  return (
    <nav className="grid flex-1 grid-cols-[275fr_225fr_225fr_225fr_225fr] border-t-2 border-[#d5d9dd] bg-[#f7f8fa] text-[#666]">
      <a href="#index" className="flex flex-col items-center pt-2 whitespace-nowrap">
        <Caret className="h-2 w-5 rotate-180 text-[#777]" />
        <span className="mt-1.5 text-[39px] leading-[50px] text-[#109a10]">3877.20</span>
        <span className="flex items-center gap-11 pl-9 text-4xl leading-[50px]">
          上证<span className="text-[#109a10]">-1.00%</span>
        </span>
      </a>
      {["交易", "发帖", "功能", "设自选"].map((n) => (
        <button key={n} type="button" className="flex flex-col items-center pt-1.5">
          <NavIcon name={n} />
          <span className="mt-2.5 text-[35px] leading-[46px]">{n}</span>
        </button>
      ))}
    </nav>
  );
}

export default function App() {
  return (
    <main className="flex min-h-screen flex-col bg-white font-['Noto_Sans_CJK_SC',sans-serif]">
      <StatusBar />
      <Header />
      <Quote />
      <Notice />
      <Tabs />
      <MovingAverages />
      <div className="pr-[13px] pl-3">
        <PriceChart />
      </div>
      <div className="flex h-16 items-center gap-1 pl-4 whitespace-nowrap">
        <Picker label="成交量指标" options="成交量" />
        <div className="flex items-center gap-2.5 pb-1 text-[27px] leading-[46px]">
          <span className="flex items-center gap-1 text-[#222]">73385<Trend narrow /></span>
          <span className="flex items-center gap-1 text-[#e9c02e]">MA1:10.61万<Trend narrow /></span>
          <span className="flex items-center gap-1 text-[#c22fcf]">MA2:13.83万<Trend narrow /></span>
          <span className="flex items-center gap-1 text-[#109a10]">MA3:20.92万<Trend narrow /></span>
          <span className="text-[#888]">虚拟成交量:14.12万</span>
        </div>
        <button type="button" aria-label="展开" className="ml-auto grid h-[62px] w-[57px] shrink-0 place-content-center rounded-l-xl bg-[#999] text-white">
          <ChevronLeft className="-ml-2 size-12" strokeWidth={2.500} />
        </button>
      </div>
      <div className="pr-[13px] pl-3">
        <VolumeChart />
      </div>
      <IndicatorRow name="BOLL">
        <Legend color="text-[#222]" text="MID:17.26" />
        <Legend color="text-[#e9c02e]" text="UP:19.34" up />
        <Legend color="text-[#c22fcf]" text="LOW:15.18" />
      </IndicatorRow>
      <div className="pr-[13px] pl-3">
        <BollChart />
      </div>
      <IndicatorRow name="RSI">
        <Legend color="text-[#222]" text="RSI1:21.29" />
        <Legend color="text-[#e9c02e]" text="RSI2:29.14" />
        <Legend color="text-[#c22fcf]" text="RSI3:36.85" />
      </IndicatorRow>
      <div className="pr-[13px] pl-3">
        <RsiChart />
      </div>
      <IndicatorRow name="MACD">
        <Legend color="text-[#222]" text="DIF:−0.60" />
        <Legend color="text-[#e9c02e]" text="DEA:−0.41" />
        <Legend color="text-[#c22fcf]" text="M:−0.38" />
      </IndicatorRow>
      <div className="pr-[13px] pl-3">
        <MacdChart />
      </div>
      <div className="flex h-[86px] justify-between px-[17px] pt-2 text-[39px] leading-[48px] text-[#888]">
        <time dateTime="2025-05-28">20250528</time>
        <time dateTime="2025-10-17">20251017</time>
      </div>
      <Promo />
      <hr className="mt-4 mb-6 border-t-2 border-[#d9dadb]" />
      <BottomBar />
    </main>
  );
}
